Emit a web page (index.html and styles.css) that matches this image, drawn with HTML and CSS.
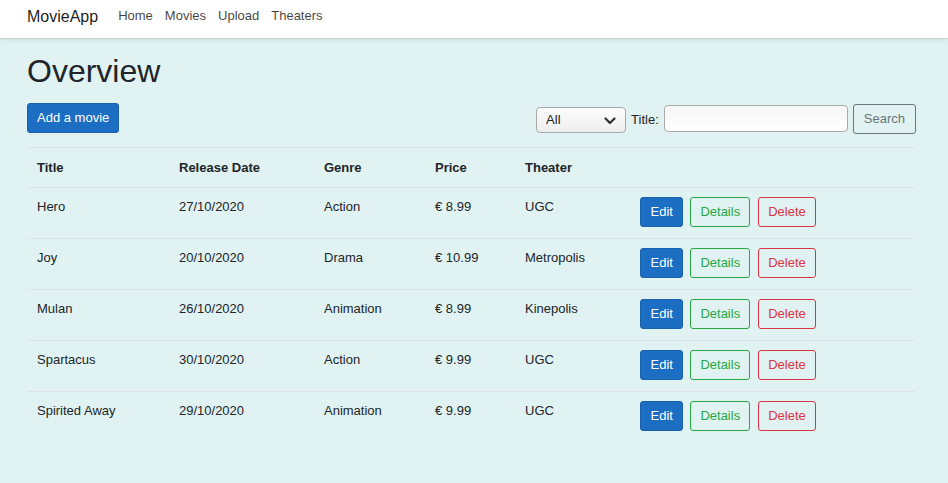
FILE: index.html
```html
<!DOCTYPE html>
<html lang="en">
<head>
<meta charset="utf-8">
<title>MovieApp</title>
<link rel="stylesheet" href="styles.css">
</head>
<body>
<header class="navbar">
  <a class="brand" href="#">MovieApp</a>
  <nav class="nav">
    <a class="nav-link" href="#">Home</a>
    <a class="nav-link" href="#">Movies</a>
    <a class="nav-link" href="#">Upload</a>
    <a class="nav-link" href="#">Theaters</a>
  </nav>
</header>
<main class="main">
  <h1 class="title">Overview</h1>
  <div class="toolbar">
    <button class="btn btn-primary">Add a movie</button>
    <form class="search">
      <span class="select-wrap">
        <select class="select"><option>All</option></select>
        <svg class="chevron" width="12" height="8" viewBox="0 0 12 8"><path d="M1.5 1.5 L6 6 L10.5 1.5" fill="none" stroke="#333" stroke-width="2.2" stroke-linecap="round" stroke-linejoin="round"/></svg>
      </span>
      <label class="label">Title:</label>
      <input class="input" type="text">
      <button class="btn btn-outline-secondary" type="button">Search</button>
    </form>
  </div>
  <table class="table">
    <colgroup>
      <col class="c1"><col class="c2"><col class="c3"><col class="c4"><col class="c5"><col>
    </colgroup>
    <thead>
      <tr><th>Title</th><th>Release Date</th><th>Genre</th><th>Price</th><th>Theater</th><th></th></tr>
    </thead>
    <tbody>
      <tr><td>Hero</td><td>27/10/2020</td><td>Action</td><td>€ 8.99</td><td>UGC</td>
        <td><div class="actions"><button class="btn btn-primary btn-edit">Edit</button><button class="btn btn-outline-success">Details</button><button class="btn btn-outline-danger">Delete</button></div></td></tr>
      <tr><td>Joy</td><td>20/10/2020</td><td>Drama</td><td>€ 10.99</td><td>Metropolis</td>
        <td><div class="actions"><button class="btn btn-primary btn-edit">Edit</button><button class="btn btn-outline-success">Details</button><button class="btn btn-outline-danger">Delete</button></div></td></tr>
      <tr><td>Mulan</td><td>26/10/2020</td><td>Animation</td><td>€ 8.99</td><td>Kinepolis</td>
        <td><div class="actions"><button class="btn btn-primary btn-edit">Edit</button><button class="btn btn-outline-success">Details</button><button class="btn btn-outline-danger">Delete</button></div></td></tr>
      <tr><td>Spartacus</td><td>30/10/2020</td><td>Action</td><td>€ 9.99</td><td>UGC</td>
        <td><div class="actions"><button class="btn btn-primary btn-edit">Edit</button><button class="btn btn-outline-success">Details</button><button class="btn btn-outline-danger">Delete</button></div></td></tr>
      <tr><td>Spirited Away</td><td>29/10/2020</td><td>Animation</td><td>€ 9.99</td><td>UGC</td>
        <td><div class="actions"><button class="btn btn-primary btn-edit">Edit</button><button class="btn btn-outline-success">Details</button><button class="btn btn-outline-danger">Delete</button></div></td></tr>
    </tbody>
  </table>
</main>
</body>
</html>
```

FILE: styles.css
```css
* { box-sizing: border-box; }
html { font-size: 13px; }
body {
  margin: 0;
  font-family: "Liberation Sans", Arial, Helvetica, sans-serif;
  font-size: 13px;
  line-height: 19px;
  color: #212529;
  background: #e0f2f1;
  min-height: 483px;
}
.navbar {
  height: 38px;
  background: #fff;
  display: flex;
  align-items: center;
  padding: 0 27px 5px;
  box-shadow: 0 1px 1px rgba(0,0,0,0.08), 0 2px 6px rgba(0,0,0,0.07);
}
.brand {
  font-size: 16px;
  color: rgba(0,0,0,0.9);
  text-decoration: none;
  margin-right: 14px;
  line-height: 24px;
}
.nav { display: flex; margin-top: -2px; }
.nav-link {
  color: rgba(0,0,0,0.75);
  text-decoration: none;
  padding: 0 6px;
  line-height: 20px;
}
.main {
  padding: 14px 32px 0 27px;
}
.title {
  font-size: 32px;
  font-weight: 500;
  line-height: 38px;
  margin: 0 0 13px;
}
.toolbar {
  display: flex;
  justify-content: space-between;
  align-items: flex-start;
  margin-bottom: 13px;
}
.btn {
  font-family: inherit;
  font-size: 13px;
  line-height: 18px;
  height: 30px;
  padding: 5px 9px;
  border: 1px solid transparent;
  border-radius: 3px;
  background: transparent;
  cursor: pointer;
}
.btn-edit { padding: 5px 9.5px; }
.btn-primary { color: #fff; background: #1b6ec2; border-color: #1861ac; }
.btn-outline-success { color: #28a745; border-color: #28a745; }
.btn-outline-danger { color: #dc3545; border-color: #dc3545; }
.btn-outline-secondary { color: #6c757d; border-color: #6c757d; padding: 5px 10px; }
.search {
  display: flex;
  align-items: center;
  gap: 5px;
  margin: 1px 0 0;
}
.select-wrap { position: relative; display: inline-block; }
.select {
  -webkit-appearance: none;
  appearance: none;
  width: 90px;
  height: 26px;
  font-family: inherit;
  font-size: 13px;
  color: #222;
  padding: 0 0 0 9px;
  border: 1px solid #a9a9a9;
  border-radius: 4px;
  background: linear-gradient(#fcfcfc, #eeeeee);
  display: block;
  margin-top: 1px;
}
.chevron { position: absolute; right: 10px; top: 11px; pointer-events: none; }
.label { color: #212529; }
.input {
  width: 184px;
  height: 27px;
  border: 1px solid #a9a9a9;
  border-radius: 4px;
  background: linear-gradient(#f6f6f6, #ffffff);
  font-family: inherit;
  font-size: 13px;
  margin-top: -2px;
}
.table {
  width: 888px;
  border-collapse: collapse;
  table-layout: fixed;
}
.c1 { width: 142px; }
.c2 { width: 145px; }
.c3 { width: 111px; }
.c4 { width: 90px; }
.c5 { width: 115px; }
.table th, .table td {
  text-align: left;
  vertical-align: top;
  border-top: 1px solid #dee2e6;
  padding: 10px 10px;
}
.table th { font-weight: 700; line-height: 19px; }
.table td { padding: 9px 10px 11px; }
.actions { display: flex; gap: 7px; }
.actions .btn-outline-danger { margin-left: 1px; }
```
